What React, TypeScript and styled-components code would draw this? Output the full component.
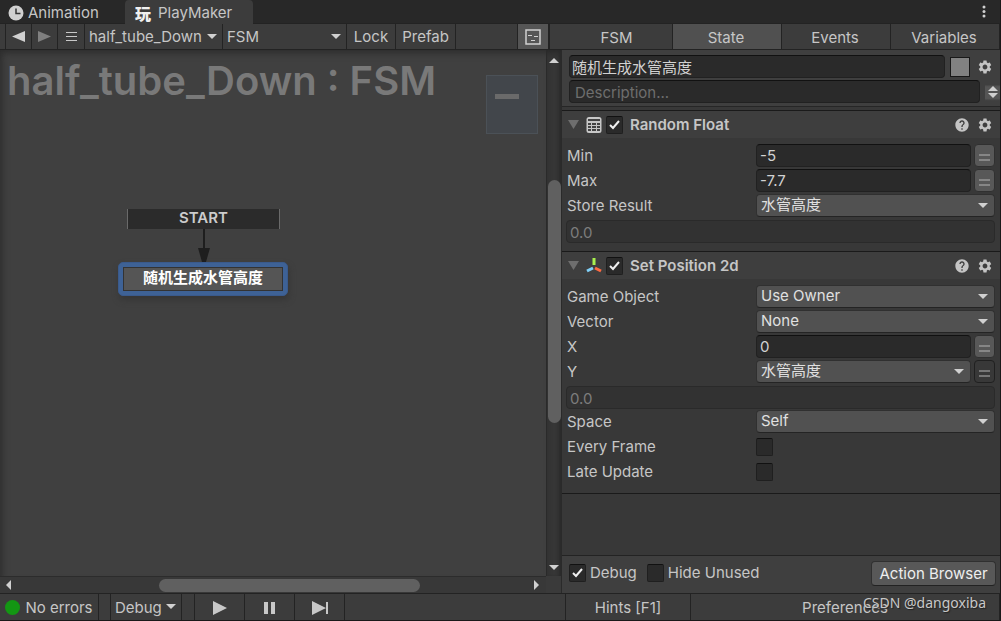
import React from 'react';
import styled, { createGlobalStyle, css } from 'styled-components';
import { MdSettings, MdHelp } from 'react-icons/md';

const GlobalStyle = createGlobalStyle`
  *, *::before, *::after { box-sizing: border-box; }
  body {
    margin: 0;
    background: #282828;
    color: #c6c6c6;
    font: 15px/20px Inter, "Noto Sans CJK SC", sans-serif;
    overflow: hidden;
  }
  button, input, select, textarea {
    font: inherit;
    color: inherit;
    margin: 0;
    padding: 0;
    border: 0;
    border-radius: 0;
    background: none;
    outline: none;
  }
`;

const LINE = '#232323';

const Window = styled.div`
  position: relative;
  display: flex;
  flex-direction: column;
  height: 100vh;
  border-right: 1px solid #1a1a1a;
  border-bottom: 1px solid #1a1a1a;
`;

/* ---------- window tabs ---------- */

const TabBar = styled.header`
  display: flex;
  height: 24px;
  flex: none;
  background: #282828;
  border-bottom: 1px solid ${LINE};
`;

const WindowTab = styled.button<{ $active?: boolean }>`
  display: flex;
  align-items: center;
  gap: ${p => (p.$active ? 7 : 4)}px;
  width: ${p => (p.$active ? 128 : 125)}px;
  height: 24px;
  padding: 2px 0 0 ${p => (p.$active ? 10 : 8)}px;
  border-radius: 4px 4px 0 0;
  background: ${p => (p.$active ? '#3c3c3c' : 'transparent')};
`;

const MakerLogo = styled.span`
  font: 900 16px/20px "Noto Sans CJK SC", sans-serif;
  color: #f0f0f0;
`;

const MenuButton = styled.button`
  display: flex;
  align-items: center;
  margin-left: auto;
  padding: 0 12px;
`;

/* ---------- toolbar ---------- */

const Toolbar = styled.div`
  display: flex;
  height: 26px;
  flex: none;
  background: #3c3c3c;
  border-bottom: 1px solid ${LINE};
`;

const ToolGroup = styled.div`
  display: flex;
  flex: 1;
  min-width: 0;
  padding-left: 5px;
  border-right: 2px solid ${LINE};
`;

const ToolButton = styled.button<{ $width: number; $active?: boolean }>`
  display: flex;
  align-items: center;
  justify-content: center;
  width: ${p => p.$width}px;
  border-left: 1px solid ${LINE};
  background: ${p => (p.$active ? '#555' : 'transparent')};
`;

const ToolSpace = styled.div`
  flex: 1;
  border-left: 1px solid ${LINE};
`;

const ToolPick = styled.div<{ $width: number }>`
  position: relative;
  width: ${p => p.$width}px;
  border-left: 1px solid ${LINE};
  select {
    appearance: none;
    width: 100%;
    height: 25px;
    padding-left: 4px;
  }
  svg {
    position: absolute;
    right: 5px;
    top: 10px;
    pointer-events: none;
  }
`;

const PanelTabs = styled.nav`
  display: grid;
  grid-template-columns: 123px repeat(3, 1fr);
  width: 450px;
`;

const PanelTab = styled.button<{ $active?: boolean }>`
  padding: 2px 2px 0 0;
  border-right: 1px solid ${LINE};
  background: ${p => (p.$active ? '#505050' : 'transparent')};
  &:first-child { padding-left: 13px; }
`;

/* ---------- graph ---------- */

const Main = styled.main`
  display: flex;
  flex: 1;
  min-height: 0;
`;

const GraphPane = styled.section`
  flex: 1;
  min-width: 0;
  display: grid;
  grid-template-columns: 1fr 15px;
  grid-template-rows: 1fr 17px;
  background: #3a3a3a;
`;

const Canvas = styled.div`
  position: relative;
  overflow: hidden;
  padding: 6px 7px;
  background: #404040;
  box-shadow: inset 4px 5px 7px -2px #2c2c2c;
`;

const GraphTitle = styled.h1`
  margin: 0;
  font-size: 40px;
  line-height: 50px;
  font-weight: 600;
  color: #797979;
  white-space: nowrap;
`;

const MiniMap = styled.div`
  position: absolute;
  top: 25px;
  right: 8px;
  width: 52px;
  height: 59px;
  padding: 18px 8px;
  border: 1px solid #4b5157;
  background: #42464b;
`;

const MiniNode = styled.div`
  width: 24px;
  height: 5px;
  background: #6a6a6a;
`;

const StartNode = styled.div`
  position: absolute;
  left: 127px;
  top: 159px;
  width: 153px;
  height: 20px;
  border: solid #6a6a6a;
  border-width: 0 1px;
  background: #2b2b2b;
  text-align: center;
  font-weight: 600;
  line-height: 18px;
  color: #ccc;
`;

const Arrow = styled.svg`
  position: absolute;
  left: 197px;
  top: 179px;
`;

const StateNode = styled.button`
  position: absolute;
  left: 118px;
  top: 212px;
  width: 170px;
  height: 34px;
  padding: 4px;
  border: 1px solid #3a5a8c;
  border-radius: 5px;
  background: #3e6296;
  box-shadow: 1px 4px 6px #363636;
  color: #fff;
  font-weight: 700;
  span {
    display: block;
    height: 24px;
    line-height: 19px;
    border: 1px solid #333;
    background: #555;
  }
`;

const VBar = styled.div`
  display: flex;
  flex-direction: column;
  align-items: center;
  padding: 8px 0 6px;
  border-left: 1px solid #2a2a2a;
  background: #363636;
  box-shadow: inset 0 5px 6px -2px #292929, inset -3px 0 3px -1px #2c2c2c;
`;

const HBar = styled.div`
  display: flex;
  align-items: center;
  padding: 0 7px 0 6px;
  border-top: 1px solid #2c2c2c;
  background: #383838;
`;

const Track = styled.div<{ $vertical?: boolean }>`
  display: flex;
  flex: 1;
  align-self: stretch;
  flex-direction: ${p => (p.$vertical ? 'column' : 'row')};
  padding: ${p => (p.$vertical ? '0 0 0 1px' : '2px 0 1px')};
`;

const TrackGap = styled.div<{ $grow: number }>`
  flex: ${p => p.$grow} 1 0;
`;

const Thumb = styled.div<{ $grow: number }>`
  flex: ${p => p.$grow} 1 0;
  border-radius: 7px;
  background: #606060;
`;

/* ---------- inspector ---------- */

const Inspector = styled.section`
  display: flex;
  flex-direction: column;
  width: 439px;
  border-left: 1px solid #2a2a2a;
  background: #383838;
`;

const StateHeader = styled.div`
  display: flex;
  flex-direction: column;
  gap: 2px;
  padding: 5px 0 3px 7px;
  margin-bottom: 3px;
  background: #3f3f3f;
  border-bottom: 1px solid #262626;
`;

const HeaderRow = styled.div<{ $end: number }>`
  display: flex;
  align-items: center;
  gap: 5px;
  padding-right: ${p => p.$end}px;
`;

const TextInput = styled.input<{ $dim?: boolean }>`
  flex: 1;
  min-width: 0;
  width: 100%;
  height: 23px;
  padding: 0 3px;
  border: 1px solid #212121;
  border-top-color: #111;
  border-radius: 4px;
  background: #2a2a2a;
  color: #d2d2d2;
  ${p => p.$dim && css`
    padding-top: 2px;
    border-color: #2a2a2a;
    background: #323232;
    color: #7d7d7d;
  `}
`;

const NameInput = styled(TextInput)`
  padding: 0 2px;
`;

const Description = styled(TextInput)`
  padding: 2px 5px 0;
  &::placeholder { color: #6e6e6e; opacity: 1; }
`;

const Swatch = styled.button`
  width: 20px;
  height: 20px;
  margin-right: 2px;
  border: 1px solid #191919;
  background: #828282;
`;

const IconButton = styled.button`
  display: flex;
  color: #c4c4c4;
`;

const Stepper = styled.div`
  display: flex;
  flex-direction: column;
  align-items: center;
  justify-content: center;
  gap: 2px;
  width: 15px;
  height: 23px;
  background: linear-gradient(#3f3f3f 20%, #555 30% 80%, #3f3f3f 90%);
  button { display: flex; }
`;

const ActionHeader = styled.div`
  display: flex;
  align-items: center;
  height: 28px;
  padding: 0 7px 0 6px;
  border-top: 1px solid #1a1a1a;
  background: #3e3e3e;
  font-weight: 600;
`;

const Fold = styled.button`
  display: flex;
  margin-right: 6px;
`;

const ActionIcon = styled.svg`
  margin-right: 4px;
`;

const ActionName = styled.label`
  flex: 1;
  padding-left: 7px;
`;

const HeaderTools = styled.div`
  display: flex;
  gap: 7px;
`;

const ActionBody = styled.div`
  display: grid;
  grid-auto-rows: 25px;
  padding: 5px 5px 8px 4px;
`;

const Row = styled.div`
  display: grid;
  grid-template-columns: 190px 1fr;
  align-items: center;
`;

const Cell = styled.div`
  display: flex;
  align-items: center;
  gap: 3px;
  min-width: 0;
`;

const ResultCell = styled.div`
  display: flex;
  align-items: flex-end;
`;

const RowLabel = styled.label`
  padding: 1px 0 0 1px;
`;

const Pick = styled.div`
  position: relative;
  flex: 1;
  min-width: 0;
  select {
    appearance: none;
    display: block;
    width: 100%;
    height: 23px;
    padding: 0 24px 2px 4px;
    border: 1px solid #303030;
    border-bottom-color: #242424;
    border-radius: 4px;
    background: #515151;
    color: #e0e0e0;
  }
  svg {
    position: absolute;
    right: 7px;
    top: 9px;
    pointer-events: none;
  }
`;

const VariableToggle = styled.button<{ $on?: boolean }>`
  display: flex;
  flex-direction: column;
  align-items: center;
  justify-content: center;
  width: 21px;
  height: 23px;
  border: 1px solid ${p => (p.$on ? '#202020' : '#303030')};
  border-radius: 4px;
  background: ${p => (p.$on ? '#383838' : '#585858')};
  &::before {
    content: '';
    width: 11px;
    height: 7px;
    margin-top: 3px;
    border: solid ${p => (p.$on ? '#767676' : '#868686')};
    border-width: 2px 0;
  }
`;

const CheckBox = styled.span`
  position: relative;
  display: inline-flex;
  input {
    appearance: none;
    width: 17px;
    height: 18px;
    border: 1px solid #1f1f1f;
    border-top-color: #111;
    border-radius: 2px;
    background: #2a2a2a;
  }
  svg {
    position: absolute;
    left: 3px;
    top: 4px;
    display: none;
    pointer-events: none;
  }
  input:checked + svg { display: block; }
`;

const InspectorFooter = styled.div`
  display: flex;
  align-items: center;
  height: 38px;
  margin-top: auto;
  padding: 0 4px 3px 7px;
  border-top: 1px solid ${LINE};
  background: #3f3f3f;
`;

const FooterLabel = styled.label`
  padding: 0 10px 0 4px;
`;

const PushButton = styled.button`
  margin-left: auto;
  width: 125px;
  height: 25px;
  padding-top: 1px;
  border: 1px solid #303030;
  border-bottom-color: #222;
  border-radius: 4px;
  background: #585858;
  color: #eee;
  white-space: nowrap;
`;

const ListEnd = styled.div`
  margin-top: 1px;
  border-top: 1px solid #1a1a1a;
`;

/* ---------- status bar ---------- */

const StatusBar = styled.footer`
  display: flex;
  height: 27px;
  flex: none;
  background: #3c3c3c;
  border-top: 1px solid ${LINE};
`;

const StatusItem = styled.button<{ $width?: number; $grow?: boolean }>`
  display: flex;
  align-items: center;
  justify-content: center;
  gap: 5px;
  width: ${p => (p.$width ? p.$width + 'px' : 'auto')};
  flex: ${p => (p.$grow ? '1' : 'none')};
  padding-top: 1px;
  border-right: 1px solid ${LINE};
`;

const StatusSpace = styled.div<{ $width?: number }>`
  width: ${p => (p.$width ? p.$width + 'px' : 'auto')};
  flex: ${p => (p.$width ? 'none' : '1')};
  border-right: 1px solid ${LINE};
`;

const StatusRight = styled.div`
  display: flex;
  width: 434px;
`;

const StatusDot = styled.span`
  width: 15px;
  height: 15px;
  border-radius: 50%;
  background: #139613;
`;

const StatusPick = styled(ToolPick)`
  flex: none;
  border-left: 0;
  border-right: 1px solid ${LINE};
  select { height: 27px; }
`;

const Watermark = styled.div`
  position: absolute;
  right: 14px;
  bottom: 7px;
  font: 14px/20px "Noto Sans", sans-serif;
  color: #c8c8c8;
  text-shadow: 1px 1px 1px #222;
  pointer-events: none;
`;

/* ---------- small drawings ---------- */

const Caret = ({ dir = 'down' }: { dir?: 'down' | 'up' | 'left' | 'right' }) => {
  const flat = dir === 'down' || dir === 'up';
  const shape = {
    down: '0,0 10,0 5,5',
    up: '0,5 10,5 5,0',
    left: '5,0 5,10 0,5',
    right: '0,0 0,10 5,5',
  }[dir];
  return (
    <svg width={flat ? 10 : 5} height={flat ? 5 : 10} fill="#d0d0d0" aria-hidden>
      <polygon points={shape} />
    </svg>
  );
};

const Check = ({ id, on }: { id: string; on?: boolean }) => (
  <CheckBox>
    <input type="checkbox" id={id} defaultChecked={on} />
    <svg width="12" height="10" fill="none" stroke="#f0f0f0" strokeWidth="2" aria-hidden>
      <path d="M1 5l3 3 6-7" />
    </svg>
  </CheckBox>
);

const CalculatorIcon = () => (
  <ActionIcon width="16" height="16" viewBox="0 0 16 16" aria-hidden>
    <rect x=".5" y="0" width="15" height="16" rx="2.500" fill="#c8c8c8" />
    <path
      d="M2 2h12v2H2zM2 6h3v2H2zM6 6h4v2H6zM11 6h3v2h-3zM2 9h3v2H2zM6 9h4v2H6zM11 9h3v2h-3zM2 12h3v2H2zM6 12h4v2H6zM11 12h3v2h-3z"
      fill="#444"
    />
  </ActionIcon>
);

const AxesIcon = () => (
  <ActionIcon width="16" height="16" viewBox="0 0 16 16" strokeWidth="3" aria-hidden>
    <path d="M8 0v7" stroke="#a8f04e" />
    <path d="M7 10L1 13" stroke="#80d0f8" />
    <path d="M9 10l6 3" stroke="#ff6a42" />
  </ActionIcon>
);

const Action = ({ id, name, icon, children }: {
  id: string; name: string; icon: React.ReactNode; children: React.ReactNode;
}) => (
  <section>
    <ActionHeader>
      <Fold aria-label={`Fold ${name}`}>
        <svg width="12" height="10" fill="#6e6e6e"><polygon points="0,0 11,0 5.500,9" /></svg>
      </Fold>
      {icon}
      <Check id={id} on />
      <ActionName htmlFor={id}>{name}</ActionName>
      <HeaderTools>
        <IconButton aria-label="Help"><MdHelp size={16} /></IconButton>
        <IconButton aria-label="Settings"><MdSettings size={16} /></IconButton>
      </HeaderTools>
    </ActionHeader>
    <ActionBody>{children}</ActionBody>
  </section>
);

const NumberRow = ({ id, label, value }: { id: string; label: string; value: string }) => (
  <Row>
    <RowLabel htmlFor={id}>{label}</RowLabel>
    <Cell>
      <TextInput id={id} defaultValue={value} />
      <VariableToggle aria-label={`Use variable for ${label}`} />
    </Cell>
  </Row>
);

const PickRow = ({ id, label, value, variable }: {
  id: string; label: string; value: string; variable?: boolean;
}) => (
  <Row>
    <RowLabel htmlFor={id}>{label}</RowLabel>
    <Cell>
      <Pick>
        <select id={id}><option>{value}</option></select>
        <Caret />
      </Pick>
      {variable && <VariableToggle $on aria-label={`Use variable for ${label}`} />}
    </Cell>
  </Row>
);

const CheckRow = ({ id, label }: { id: string; label: string }) => (
  <Row>
    <RowLabel htmlFor={id}>{label}</RowLabel>
    <Cell><Check id={id} /></Cell>
  </Row>
);

export default function App() {
  return (
    <Window>
      <GlobalStyle />
      <TabBar>
        <WindowTab>
          <svg width="16" height="16" aria-hidden>
            <circle cx="8" cy="8" r="7.500" fill="#d0d0d0" />
            <path d="M8 3.500V8.500H12.500" fill="none" stroke="#333" strokeWidth="1.500" />
          </svg>
          Animation
        </WindowTab>
        <WindowTab $active><MakerLogo>玩</MakerLogo>PlayMaker</WindowTab>
        <MenuButton aria-label="Window menu">
          <svg width="8" height="14" fill="#d0d0d0">
            <circle cx="4" cy="2" r="1.500" /><circle cx="4" cy="6.500" r="1.500" /><circle cx="4" cy="11" r="1.500" />
          </svg>
        </MenuButton>
      </TabBar>

      <Toolbar>
        <ToolGroup>
          <ToolButton $width={26} aria-label="Back">
            <svg width="13" height="12" fill="#d0d0d0"><polygon points="13,0 13,11 0,5.500" /></svg>
          </ToolButton>
          <ToolButton $width={26} aria-label="Forward">
            <svg width="13" height="12" fill="#808080"><polygon points="0,0 0,11 13,5.500" /></svg>
          </ToolButton>
          <ToolButton $width={27} aria-label="Recent">
            <svg width="11" height="11" stroke="#c8c8c8"><path d="M0 1.500h11M0 5.500h11M0 9.500h11" /></svg>
          </ToolButton>
          <ToolPick $width={138}>
            <select aria-label="Game object"><option>half_tube_Down</option></select>
            <Caret />
          </ToolPick>
          <ToolPick $width={124}>
            <select aria-label="FSM"><option>FSM</option></select>
            <Caret />
          </ToolPick>
          <ToolButton $width={49}>Lock</ToolButton>
          <ToolButton $width={60}>Prefab</ToolButton>
          <ToolSpace />
          <ToolButton $width={31} $active aria-label="Toggle minimap">
            <svg width="16" height="16" fill="none" stroke="#d0d0d0">
              <rect x="1" y="1" width="14" height="14" strokeWidth="1.500" />
              <path d="M3 6.500h4M9 7.500h4M6 11.500h4" />
            </svg>
          </ToolButton>
        </ToolGroup>
        <PanelTabs>
          <PanelTab>FSM</PanelTab>
          <PanelTab $active>State</PanelTab>
          <PanelTab>Events</PanelTab>
          <PanelTab>Variables</PanelTab>
        </PanelTabs>
      </Toolbar>

      <Main>
        <GraphPane>
          <Canvas>
            <GraphTitle>half_tube_Down : FSM</GraphTitle>
            <MiniMap><MiniNode /></MiniMap>
            <StartNode>START</StartNode>
            <StateNode><span>随机生成水管高度</span></StateNode>
            <Arrow width="14" height="34" fill="#1e1e1e" aria-hidden>
              <rect x="6" width="2" height="20" />
              <polygon points="1,19 13,19 9,33 5,33" />
            </Arrow>
          </Canvas>
          <VBar>
            <Caret dir="up" />
            <Track $vertical>
              <TrackGap $grow={117} />
              <Thumb $grow={244} />
              <TrackGap $grow={142} />
            </Track>
            <Caret dir="down" />
          </VBar>
          <HBar>
            <Caret dir="left" />
            <Track>
              <TrackGap $grow={148} />
              <Thumb $grow={262} />
              <TrackGap $grow={114} />
            </Track>
            <Caret dir="right" />
          </HBar>
        </GraphPane>

        <Inspector>
          <StateHeader>
            <HeaderRow $end={7}>
              <NameInput aria-label="State name" defaultValue="随机生成水管高度" />
              <Swatch aria-label="State color" />
              <IconButton aria-label="State settings"><MdSettings size={16} /></IconButton>
            </HeaderRow>
            <HeaderRow $end={0}>
              <Description aria-label="Description" placeholder="Description..." />
              <Stepper>
                <button aria-label="Scroll up"><Caret dir="up" /></button>
                <button aria-label="Scroll down"><Caret dir="down" /></button>
              </Stepper>
            </HeaderRow>
          </StateHeader>

          <Action id="random-float" name="Random Float" icon={<CalculatorIcon />}>
            <NumberRow id="min" label="Min" value="-5" />
            <NumberRow id="max" label="Max" value="-7.7" />
            <PickRow id="store" label="Store Result" value="水管高度" />
            <ResultCell><TextInput $dim readOnly aria-label="Stored value" defaultValue="0.0" /></ResultCell>
          </Action>

          <Action id="set-position" name="Set Position 2d" icon={<AxesIcon />}>
            <PickRow id="object" label="Game Object" value="Use Owner" />
            <PickRow id="vector" label="Vector" value="None" />
            <NumberRow id="x" label="X" value="0" />
            <PickRow id="y" label="Y" value="水管高度" variable />
            <ResultCell><TextInput $dim readOnly aria-label="Y value" defaultValue="0.0" /></ResultCell>
            <PickRow id="space" label="Space" value="Self" />
            <CheckRow id="every" label="Every Frame" />
            <CheckRow id="late" label="Late Update" />
          </Action>
          <ListEnd />

          <InspectorFooter>
            <Check id="debug" on />
            <FooterLabel htmlFor="debug">Debug</FooterLabel>
            <Check id="hide" />
            <FooterLabel htmlFor="hide">Hide Unused</FooterLabel>
            <PushButton>Action Browser</PushButton>
          </InspectorFooter>
        </Inspector>
      </Main>

      <StatusBar>
        <StatusItem $width={99}><StatusDot />No errors</StatusItem>
        <StatusSpace $width={12} />
        <StatusPick $width={71}>
          <select aria-label="Debug menu"><option>Debug</option></select>
          <Caret />
        </StatusPick>
        <StatusSpace $width={13} />
        <StatusItem $width={50} aria-label="Play">
          <svg width="14" height="14" fill="#c8c8c8"><polygon points="0,0 0,14 14,7" /></svg>
        </StatusItem>
        <StatusItem $width={50} aria-label="Pause">
          <svg width="11" height="12" fill="#c8c8c8"><path d="M0 0h4v12H0zM7 0h4v12H7z" /></svg>
        </StatusItem>
        <StatusItem $width={50} aria-label="Step">
          <svg width="16" height="14" fill="#c8c8c8"><path d="M0 0l14 7-14 7zM14 1h2v12h-2z" /></svg>
        </StatusItem>
        <StatusSpace />
        <StatusRight>
          <StatusItem $width={125}>Hints [F1]</StatusItem>
          <StatusItem $grow>Preferences</StatusItem>
        </StatusRight>
      </StatusBar>
      <Watermark>CSDN @dangoxiba</Watermark>
    </Window>
  );
}
